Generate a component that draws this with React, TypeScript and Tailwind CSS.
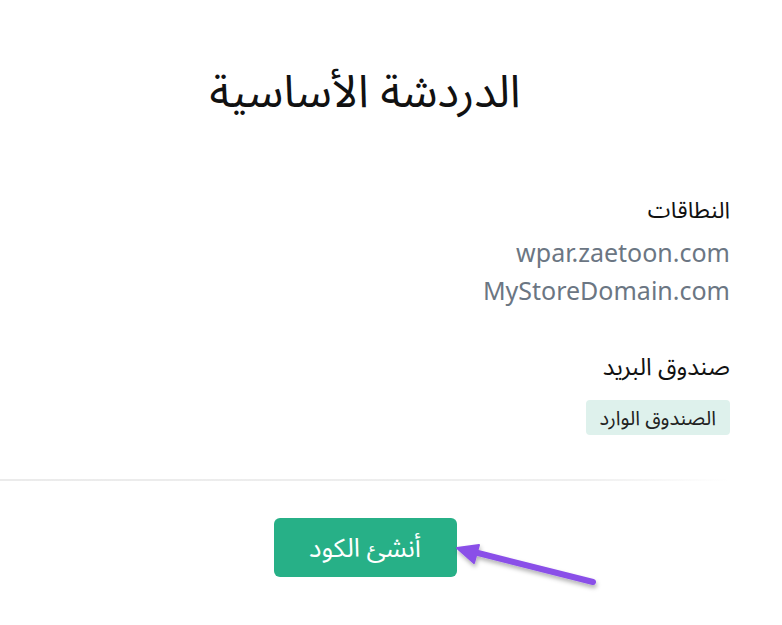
import React from "react";

const font = { fontFamily: '"Noto Sans", "Noto Sans Arabic", "DejaVu Sans", sans-serif' };

const domains = ["wpar.zaetoon.com", "MyStoreDomain.com"];

export default function App() {
  return (
    <div className="relative w-[782px] h-[625px] bg-white text-black" style={font}>
      <div dir="rtl" className="w-[730px] pt-[62px]">
        {/* Title */}
        <h1 className="text-center text-[45px] leading-[56px] font-normal text-[#111]">الدردشة الأساسية</h1>

        {/* Domains */}
        <div className="mt-[76px]">
          <h3 className="text-[23px] leading-[30px] text-[#111]">النطاقات</h3>
          <div className="mt-[9px] flex flex-col text-[25px] leading-[38px] text-[#6b7683]">
            {domains.map((d) => (
              <span key={d}>{d}</span>
            ))}
          </div>
        </div>

        {/* Mailbox */}
        <div className="mt-[41px]">
          <h3 className="text-[24px] leading-[32px] text-[#111]">صندوق البريد</h3>
          <div className="mt-[18px] flex">
            <span className="inline-flex items-center h-[35px] px-[14px] rounded-[4px] bg-[#def1ec] text-[20px] text-[#222]">
              الصندوق الوارد
            </span>
          </div>
        </div>

        {/* Separator */}
        <div className="mt-[44px] h-[2px] bg-gradient-to-r from-[#ebebeb] via-[#efefef] via-80% to-transparent" />

        {/* Action */}
        <div className="mt-[37px] flex justify-center">
          <button className="w-[183px] h-[59px] rounded-[6px] bg-[#27b087] text-white text-[26px]">
            أنشئ الكود
          </button>
        </div>
      </div>

      {/* Annotation arrow */}
      <svg className="absolute left-0 top-0 pointer-events-none" width="782" height="625">
        <defs>
          <filter id="sh" x="-20%" y="-50%" width="140%" height="200%">
            <feDropShadow dx="1" dy="3" stdDeviation="2" floodColor="#000" floodOpacity="0.3" />
          </filter>
        </defs>
        <g filter="url(#sh)" fill="#8a50e8" stroke="#8a50e8" strokeLinejoin="round">
          <line x1="593" y1="582" x2="474" y2="552" strokeWidth="6" strokeLinecap="round" />
          <polygon points="457,548 479,545 474,563" strokeWidth="2" />
        </g>
      </svg>
    </div>
  );
}
